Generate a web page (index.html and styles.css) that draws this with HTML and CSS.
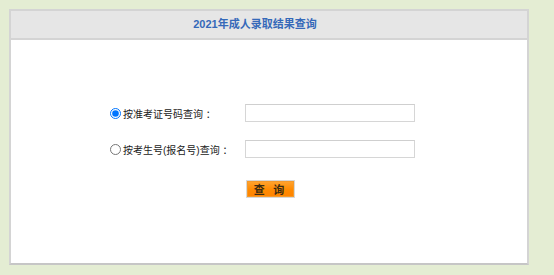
FILE: index.html
```html
<!DOCTYPE html>
<html>
<head>
    <meta charset="utf-8">
    <title>2021年成人录取结果查询</title>
    <link rel="stylesheet" href="styles.css">
</head>
<body>
    <div class="panel">
        <div class="panel-head">2021年成人录取结果查询</div>
        <form class="panel-body">
            <div class="row">
                <label class="label"><input type="radio" name="type" checked>按准考证号码查询 ：</label>
                <input class="field" type="text">
            </div>
            <div class="row">
                <label class="label"><input type="radio" name="type">按考生号(报名号)查询 ：</label>
                <input class="field" type="text">
            </div>
            <div class="actions">
                <button type="button" class="btn">查 询</button>
            </div>
        </form>
    </div>
</body>
</html>
```

FILE: styles.css
```css
body {
    margin: 0;
    padding: 9px;
    background-color: #e4edd3;
    font-family: "Liberation Sans", "Noto Sans CJK SC", sans-serif;
    font-size: 11px;
    color: #333;
}
.panel {
    width: 516px;
    height: 252px;
    border: 2px solid #d4d4d4;
    border-bottom-color: #c6c6c6;
    background-color: #fff;
}
.panel-head {
    height: 27px;
    line-height: 27px;
    padding-right: 28px;
    background-color: #e6e6e6;
    border-bottom: 2px solid #d4d4d4;
    text-align: center;
    font-weight: bold;
    font-size: 11px;
    color: #3569b9;
}
.panel-body {
    padding-top: 64px;
    padding-left: 99px;
}
.row {
    display: flex;
    align-items: center;
    height: 18px;
    margin-bottom: 18px;
}
.label {
    display: flex;
    align-items: center;
    width: 135px;
    font-size: 10px;
    color: #222;
}
.label input {
    width: 11px;
    height: 11px;
    margin: 0 2px 0 0;
}
.field {
    box-sizing: border-box;
    width: 170px;
    height: 18px;
    margin: 0;
    border: 1px solid #d6d6d6;
    border-top-color: #cfcfcf;
    outline: none;
}
.actions {
    padding-left: 136px;
    padding-top: 4px;
}
.btn {
    width: 49px;
    height: 18px;
    padding: 0;
    border: 1px solid #d8d8d8;
    background: linear-gradient(#ffa533, #ff8a00 55%, #ff8300);
    box-shadow: inset 0 0 0 1px #f59a2a;
    font-family: "Noto Sans CJK SC", sans-serif;
    font-size: 11px;
    font-weight: bold;
    color: #3a2a10;
    letter-spacing: 3px;
}
```
